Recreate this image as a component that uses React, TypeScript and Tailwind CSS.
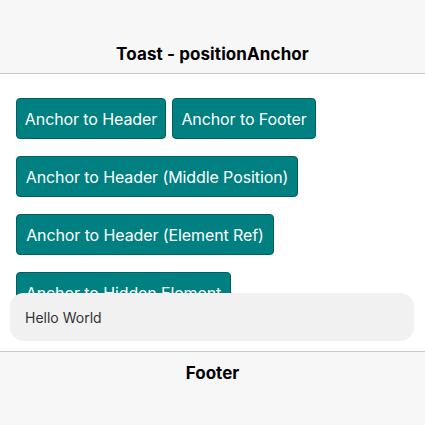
import React from "react";

const btn =
  "h-[41px] rounded-[4px] bg-[#008080] border border-[#005f5f] text-white text-[16px] leading-none whitespace-nowrap flex items-center justify-center tracking-[-0.1px]";

export default function App() {
  return (
    <div
      className="w-[425px] h-[425px] flex flex-col bg-white overflow-hidden relative"
      style={{ fontFamily: "Inter, 'Noto Sans', sans-serif" }}
    >
      <header className="h-[74px] shrink-0 bg-[#f7f7f7] border-b border-[#c8c8c8] flex items-end justify-center pb-[8px]">
        <h1 className="text-[17px] font-bold text-black leading-[22px] tracking-[0.1px]">Toast - positionAnchor</h1>
      </header>
      <main className="flex-1 overflow-hidden px-[16px] pt-[24px] flex flex-col gap-[17px] items-start">
        <div className="flex gap-[6px]">
          <button className={`${btn} w-[150px]`}>Anchor to Header</button>
          <button className={`${btn} w-[144px]`}>Anchor to Footer</button>
        </div>
        <button className={`${btn} w-[282px]`}>Anchor to Header (Middle Position)</button>
        <button className={`${btn} w-[258px]`}>Anchor to Header (Element Ref)</button>
        <button className={`${btn} w-[215px]`}>Anchor to Hidden Element</button>
      </main>
      <footer className="h-[74px] shrink-0 bg-[#f7f7f7] border-t border-[#c8c8c8] flex justify-center pt-[10px]">
        <span className="text-[17px] font-bold text-black leading-[22px]">Footer</span>
      </footer>
      <div className="absolute left-[10px] right-[11px] top-[293px] h-[48px] bg-[#f1f1f1] rounded-[14px] flex items-center px-[15px]">
        <span className="text-[14px] text-[#333333]">Hello World</span>
      </div>
    </div>
  );
}
